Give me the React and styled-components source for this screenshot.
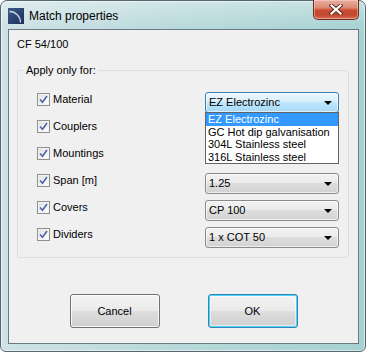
import React, { useState } from 'react';
import styled, { createGlobalStyle } from 'styled-components';

const GlobalStyle = createGlobalStyle`
    html, body {
        margin: 0;
        padding: 0;
        background: #ffffff;
    }
    * {
        box-sizing: border-box;
    }
`;

const materials = [
    'EZ Electrozinc',
    'GC Hot dip galvanisation',
    '304L Stainless steel',
    '316L Stainless steel',
];

const rows = [
    { label: 'Material', value: 'EZ Electrozinc', open: true },
    { label: 'Couplers' },
    { label: 'Mountings' },
    { label: 'Span [m]', value: '1.25' },
    { label: 'Covers', value: 'CP 100' },
    { label: 'Dividers', value: '1 x COT 50' },
];

// #region Styles

const Window = styled.div`
    width: 366px;
    height: 352px;
    border: 1px solid #56666d;
    border-radius: 7px 7px 6px 6px;
    padding: 0 6px 7px 7px;
    display: flex;
    flex-direction: column;
    background:
        linear-gradient(180deg, rgba(255,255,255,0.35) 0px, rgba(255,255,255,0) 28px),
        linear-gradient(90deg, #cfe2e6 0%, #b9d9db 45%, #a6d2d2 100%);
    box-shadow: inset 0 0 0 1px rgba(255,255,255,0.55);
    font-family: "Liberation Sans", Arial, sans-serif;
`;

const TitleBar = styled.div`
    height: 28px;
    display: flex;
    align-items: flex-start;
`;

const AppIcon = styled.svg`
    width: 16px;
    height: 16px;
    margin-top: 7px;
    flex: none;
`;

const Title = styled.div`
    margin-left: 5px;
    margin-top: 8px;
    font-size: 12px;
    line-height: 14px;
    color: #000000;
`;

const CloseButton = styled.div`
    margin-left: auto;
    margin-top: -1px;
    width: 46px;
    height: 20px;
    border: 1px solid #6e2b20;
    border-top: none;
    border-radius: 0 0 5px 5px;
    display: flex;
    align-items: center;
    justify-content: center;
    background: linear-gradient(180deg, #e9b0a2 0%, #de8a72 40%, #c94a30 55%, #c5482e 80%, #d9735a 100%);
    box-shadow: inset 0 0 0 1px rgba(255,220,210,0.45);
`;

const Client = styled.div`
    flex: 1;
    border: 1px solid #6a7a81;
    background: #f0f0f0;
    padding: 8px 8px 15px 8px;
    display: flex;
    flex-direction: column;
    font-size: 11px;
    line-height: 13px;
    color: #000000;
`;

const Caption = styled.div`
    height: 13px;
`;

const GroupBox = styled.fieldset`
    margin: 13px 1px 0 0;
    padding: 15px 9px 9px 0;
    border: 1px solid #d5dfe5;
    border-radius: 3px;
    min-width: 0;
`;

const GroupLegend = styled.legend`
    margin-left: 6px;
    padding: 0 2px;
    line-height: 13px;
    font-size: 11px;
`;

const OptionGrid = styled.div`
    display: grid;
    grid-template-columns: 1fr 134px;
    grid-auto-rows: 21px;
    row-gap: 6px;
    padding-left: 19px;
`;

const CheckLabel = styled.label`
    align-self: start;
    margin-top: 1px;
    display: flex;
    align-items: center;
    gap: 3px;
    height: 13px;
`;

const CheckBox = styled.span`
    width: 13px;
    height: 13px;
    flex: none;
    border: 1px solid #8e8f8f;
    background: linear-gradient(135deg, #dcdcdc 0%, #f4f4f4 60%, #ffffff 100%);
    box-shadow: inset 0 0 0 1px #f4f4f4;
    display: flex;
    align-items: center;
    justify-content: center;
`;

const ComboCell = styled.div`
    position: relative;
`;

const Combo = styled.div`
    height: 21px;
    display: flex;
    align-items: center;
    padding: 0 6px 0 3px;
    border: 1px solid ${p => (p.$open ? '#3c7fb1' : '#8b8b8b')};
    border-radius: 3px;
    background: ${p => (p.$open
        ? 'linear-gradient(180deg, #eaf6fd 0%, #d9f0fc 45%, #bee6fd 50%, #a7d9f5 100%)'
        : 'linear-gradient(180deg, #f2f2f2 0%, #ebebeb 45%, #dddddd 50%, #d3d3d3 100%)')};
    box-shadow: inset 0 0 0 1px rgba(255,255,255,0.6);
`;

const ComboText = styled.span`
    flex: 1;
    white-space: nowrap;
`;

const Arrow = styled.span`
    width: 0;
    height: 0;
    border-left: 4px solid transparent;
    border-right: 4px solid transparent;
    border-top: 4px solid #000000;
    margin-top: 1px;
`;

const DropList = styled.ul`
    position: absolute;
    left: 0;
    right: 0;
    top: 20px;
    margin: 0;
    padding: 0;
    list-style: none;
    background: #ffffff;
    border: 1px solid #646464;
    z-index: 2;
`;

const DropItem = styled.li`
    height: 12.5px;
    line-height: 12.5px;
    padding-left: 2px;
    white-space: nowrap;
    background: ${p => (p.$selected ? '#3399ff' : 'transparent')};
    color: ${p => (p.$selected ? '#ffffff' : '#000000')};
`;

const ButtonRow = styled.div`
    margin-top: auto;
    display: flex;
    justify-content: center;
    gap: 48px;
`;

const Button = styled.button`
    width: 90px;
    height: 34px;
    font-family: "Liberation Sans", Arial, sans-serif;
    font-size: 11px;
    color: #000000;
    border: 1px solid ${p => (p.$default ? '#3c7fb1' : '#707070')};
    border-radius: 3px;
    background: linear-gradient(180deg, #f2f2f2 0%, #ebebeb 48%, #dddddd 52%, #cfcfcf 100%);
    box-shadow: ${p => (p.$default
        ? 'inset 0 0 0 1px #48d8fb, inset 0 0 0 2px rgba(255,255,255,0.5)'
        : 'inset 0 0 0 1px rgba(255,255,255,0.8)')};
    padding: 0;
`;

// #endregion

export default function App() {
    const [checked] = useState(rows.map(() => true));

    return (
        <>
            <GlobalStyle />
            <Window>
                <TitleBar>
                    <AppIcon viewBox="0 0 16 16">
                        <defs>
                            <linearGradient id="ig" x1="0" y1="0" x2="1" y2="1">
                                <stop offset="0" stopColor="#3d5a8c" />
                                <stop offset="1" stopColor="#1c2f57" />
                            </linearGradient>
                        </defs>
                        <rect x="0" y="0" width="16" height="16" fill="url(#ig)" />
                        <path d="M1.5 3.5 A 11 11 0 0 1 12.5 14.5" fill="none" stroke="#c9d3e6" strokeWidth="1.3" />
                    </AppIcon>
                    <Title>Match properties</Title>
                    <CloseButton>
                        <svg width="14" height="11" viewBox="0 0 14 11">
                            <path d="M2.5 1.5 L11.5 9.5 M11.5 1.5 L2.5 9.5" stroke="#5a2a22" strokeWidth="4" strokeLinecap="square" />
                            <path d="M2.5 1.5 L11.5 9.5 M11.5 1.5 L2.5 9.5" stroke="#ffffff" strokeWidth="2.2" strokeLinecap="square" />
                        </svg>
                    </CloseButton>
                </TitleBar>
                <Client>
                    <Caption>CF 54/100</Caption>
                    <GroupBox>
                        <GroupLegend>Apply only for:</GroupLegend>
                        <OptionGrid>
                            {rows.map((row, index) => (
                                <React.Fragment key={row.label}>
                                    <CheckLabel>
                                        <CheckBox>
                                            {checked[index] && (
                                                <svg width="9" height="9" viewBox="0 0 9 9">
                                                    <path d="M1 4.5 L3.5 7.2 L8 1" fill="none" stroke="#4a62a8" strokeWidth="1.6" />
                                                </svg>
                                            )}
                                        </CheckBox>
                                        {row.label}
                                    </CheckLabel>
                                    <ComboCell>
                                        {row.value && (
                                            <Combo $open={row.open}>
                                                <ComboText>{row.value}</ComboText>
                                                <Arrow />
                                            </Combo>
                                        )}
                                        {row.open && (
                                            <DropList>
                                                {materials.map((m, i) => (
                                                    <DropItem key={m} $selected={i === 0}>{m}</DropItem>
                                                ))}
                                            </DropList>
                                        )}
                                    </ComboCell>
                                </React.Fragment>
                            ))}
                        </OptionGrid>
                    </GroupBox>
                    <ButtonRow>
                        <Button>Cancel</Button>
                        <Button $default>OK</Button>
                    </ButtonRow>
                </Client>
            </Window>
        </>
    );
}
